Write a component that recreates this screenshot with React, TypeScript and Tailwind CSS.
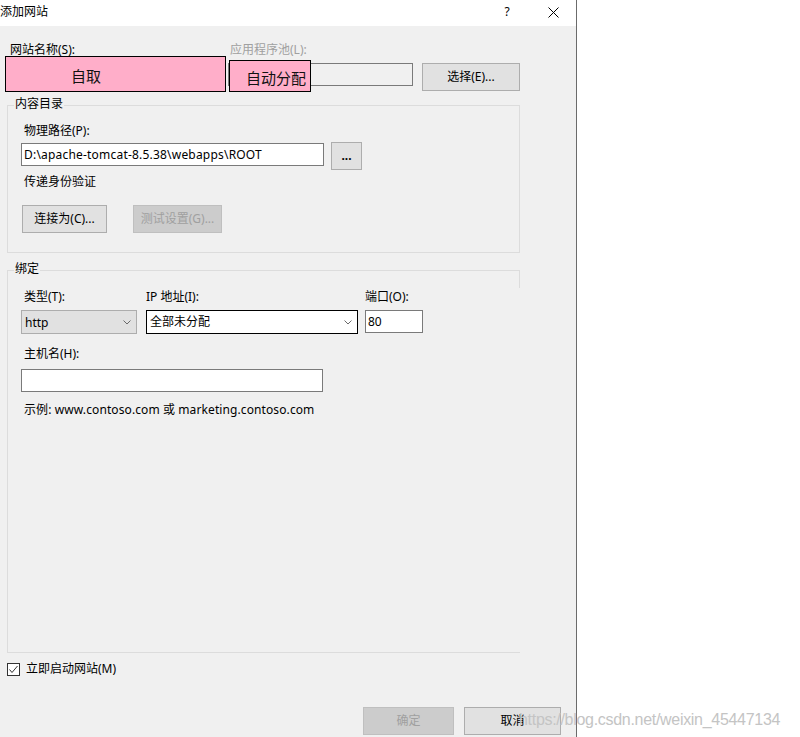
import React from "react";

function Chevron() {
  return (
    <svg width="8" height="5" viewBox="0 0 8 5" className="block">
      <path d="M0.5 0.5 L4 4 L7.5 0.5" fill="none" stroke="#6a6a6a" strokeWidth="1" />
    </svg>
  );
}

export default function App() {
  return (
    <div className="relative w-[800px] h-[737px] overflow-hidden bg-white text-[12px] leading-[16px] text-black font-['Noto_Sans','Noto_Sans_CJK_SC',sans-serif]">
      <div className="w-[577px] h-[737px] border-r border-[#6b6b6b] flex flex-col">
        {/* title bar */}
        <div className="h-[26px] bg-white flex items-center shrink-0">
          <div className="flex-1 -mt-[2px]">添加网站</div>
          <div className="w-[46px] text-center -mt-[2px]">?</div>
          <div className="w-[46px] flex justify-center -mt-[2px]">
            <svg width="11" height="11" viewBox="0 0 11 11">
              <path d="M0.5 0.5 L10.5 10.5 M10.5 0.5 L0.5 10.5" stroke="#000" strokeWidth="1" />
            </svg>
          </div>
        </div>

        {/* body */}
        <div className="relative flex-1 bg-[#f0f0f0] flex flex-col">
          <div className="flex h-[16px] mt-[16px]">
            <span className="pl-[10px] w-[230px]">网站名称(S):</span>
            <span className="text-[#a0a0a0]">应用程序池(L):</span>
          </div>
          <div className="flex items-start mt-[5px]">
            <div className="ml-[10px] w-[210px] h-[23px] bg-white border border-[#7a7a7a]" />
            <div className="ml-[8px] w-[185px] h-[23px] bg-[#f0f0f0] border border-[#7a7a7a]" />
            <button className="ml-[9px] w-[98px] h-[28px] bg-[#e1e1e1] border border-[#adadad] flex items-center justify-center">
              选择(E)...
            </button>
          </div>

          {/* pink overlays */}
          <div className="absolute left-[5px] top-[30px] w-[221px] h-[36px] bg-[#ffaec9] border border-black flex items-center pl-[65px] pt-[3px] text-[15px] text-[#111]">
            自取
          </div>
          <div className="absolute left-[229px] top-[34px] w-[82px] h-[32px] bg-[#ffaec9] border border-black flex items-center pl-[16px] pt-[4px] text-[15px] text-[#111]">
            自动分配
          </div>

          {/* 内容目录 */}
          <div className="relative mt-[14px] ml-[7px] w-[513px] h-[148px] border border-[#dcdcdc] shrink-0">
            <div className="absolute left-[6px] top-[-10px] px-[1px] bg-[#f0f0f0]">内容目录</div>
            <div className="pt-[17px] pl-[16px]">物理路径(P):</div>
            <div className="flex items-start h-[23px] mt-[4px] ml-[13px]">
              <div className="w-[303px] h-[23px] bg-white border border-[#7a7a7a] pl-[2px] flex items-center tracking-[0.2px]">
                D:\apache-tomcat-8.5.38\webapps\ROOT
              </div>
              <button className="ml-[7px] -mt-px w-[31px] h-[28px] bg-[#e1e1e1] border border-[#adadad] flex items-center justify-center font-bold">
                ...
              </button>
            </div>
            <div className="mt-[8px] ml-[16px]">传递身份验证</div>
            <div className="flex mt-[15px] ml-[14px]">
              <button className="w-[85px] h-[28px] bg-[#e1e1e1] border border-[#adadad] flex items-center justify-center">
                连接为(C)...
              </button>
              <button className="ml-[26px] w-[89px] h-[28px] bg-[#cccccc] border border-[#bfbfbf] text-[#a0a0a0] flex items-center justify-center">
                测试设置(G)...
              </button>
            </div>
          </div>

          {/* 绑定 */}
          <div className="relative mt-[17px] ml-[7px] w-[513px] h-[383px] border-t border-l border-b border-[#dcdcdc] shrink-0">
            <div className="absolute right-0 top-0 w-px h-[17px] bg-[#dcdcdc]" />
            <div className="absolute left-[6px] top-[-10px] px-[1px] bg-[#f0f0f0]">绑定</div>
            <div className="flex pt-[18px]">
              <span className="ml-[16px] w-[122px]">类型(T):</span>
              <span className="w-[219px]">IP 地址(I):</span>
              <span>端口(O):</span>
            </div>
            <div className="flex items-start mt-[5px]">
              <div className="ml-[13px] w-[116px] h-[24px] bg-[#e1e1e1] border border-[#adadad] flex items-center justify-between pl-[3px] pr-[5px]">
                <span className="pt-[2px]">http</span>
                <Chevron />
              </div>
              <div className="ml-[9px] w-[212px] h-[24px] bg-white border border-black flex items-center justify-between pl-[3px] pr-[5px]">
                <span>全部未分配</span>
                <Chevron />
              </div>
              <div className="ml-[7px] w-[58px] h-[23px] bg-white border border-[#7a7a7a] flex items-center pl-[2px]">
                80
              </div>
            </div>
            <div className="mt-[12px] ml-[16px]">主机名(H):</div>
            <div className="mt-[7px] ml-[13px] w-[302px] h-[23px] bg-white border border-[#7a7a7a]" />
            <div className="mt-[10px] ml-[16px] tracking-[0.1px]">示例: www.contoso.com 或 marketing.contoso.com</div>
          </div>

          <div className="flex items-center h-[16px] mt-[8px]">
            <div className="ml-[7px] w-[13px] h-[13px] bg-white border border-[#333] flex items-center justify-center">
              <svg width="11" height="11" viewBox="0 0 11 11">
                <path d="M1.5 5.5 L4 8.5 L9.5 2" fill="none" stroke="#333" strokeWidth="1" />
              </svg>
            </div>
            <span className="ml-[6px]">立即启动网站(M)</span>
          </div>

          <div className="flex mt-[30px]">
            <button className="ml-[363px] w-[91px] h-[28px] bg-[#cccccc] border border-[#bfbfbf] text-[#a0a0a0] flex items-center justify-center">
              确定
            </button>
            <button className="ml-[10px] w-[97px] h-[28px] bg-[#e1e1e1] border border-[#adadad] flex items-center justify-center">
              取消
            </button>
          </div>
        </div>
      </div>

      <div className="absolute left-[519px] top-[710px] text-[16px] leading-[20px] tracking-[-0.3px] text-[#c4c4c4] font-['Liberation_Sans',sans-serif] whitespace-nowrap">
        https://blog.csdn.net/weixin_45447134
      </div>
    </div>
  );
}
